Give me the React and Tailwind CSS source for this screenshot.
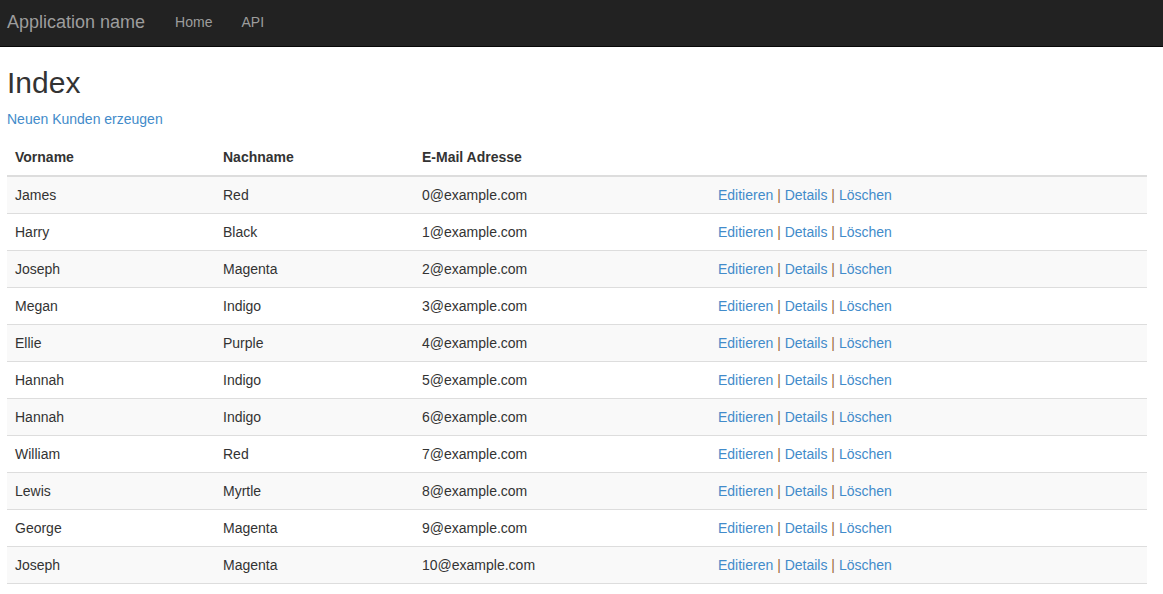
import React from 'react'

const customers = [
  ['James', 'Red'],
  ['Harry', 'Black'],
  ['Joseph', 'Magenta'],
  ['Megan', 'Indigo'],
  ['Ellie', 'Purple'],
  ['Hannah', 'Indigo'],
  ['Hannah', 'Indigo'],
  ['William', 'Red'],
  ['Lewis', 'Myrtle'],
  ['George', 'Magenta'],
  ['Joseph', 'Magenta'],
]

const Navbar = () => (
  <div className="h-[47px] bg-[#222] border-b border-[#080808] flex items-center pb-[3px] px-[7px]">
    <span className="text-[18px] text-[#9d9d9d] leading-5 mr-[30px]">Application name</span>
    <span className="text-sm text-[#9d9d9d] mr-[29px]">Home</span>
    <span className="text-sm text-[#9d9d9d]">API</span>
  </div>
)

const Actions = () => (
  <>
    <a className="text-[#428bca]">Editieren</a>
    <span className="text-[#9b6a3c]"> | </span>
    <a className="text-[#428bca]">Details</a>
    <span className="text-[#9b6a3c]"> | </span>
    <a className="text-[#428bca]">Löschen</a>
  </>
)

export default function App() {
  return (
    <div className="min-h-screen bg-white text-[#333] text-sm leading-5 font-['Liberation_Sans',Arial,sans-serif]">
      <Navbar />
      <div className="pl-[7px] pr-4">
        <h2 className="text-[30px] leading-[33px] mt-[19px] mb-[10px]">Index</h2>
        <p className="mb-[10px]">
          <a className="text-[#428bca]">Neuen Kunden erzeugen</a>
        </p>
        <table className="w-[1140px] border-collapse">
          <thead>
            <tr className="border-b-2 border-[#ddd]">
              <th className="w-[208px] text-left font-bold p-2">Vorname</th>
              <th className="w-[199px] text-left font-bold p-2">Nachname</th>
              <th className="w-[296px] text-left font-bold p-2">E-Mail Adresse</th>
              <th className="p-2"></th>
            </tr>
          </thead>
          <tbody>
            {customers.map(([first, last], i) => (
              <tr
                key={i}
                className={`border-b border-[#ddd] ${i % 2 === 0 ? 'bg-[#f9f9f9]' : 'bg-white'}`}
              >
                <td className="p-2">{first}</td>
                <td className="p-2">{last}</td>
                <td className="p-2">{i}@example.com</td>
                <td className="p-2"><Actions /></td>
              </tr>
            ))}
          </tbody>
        </table>
      </div>
    </div>
  )
}
